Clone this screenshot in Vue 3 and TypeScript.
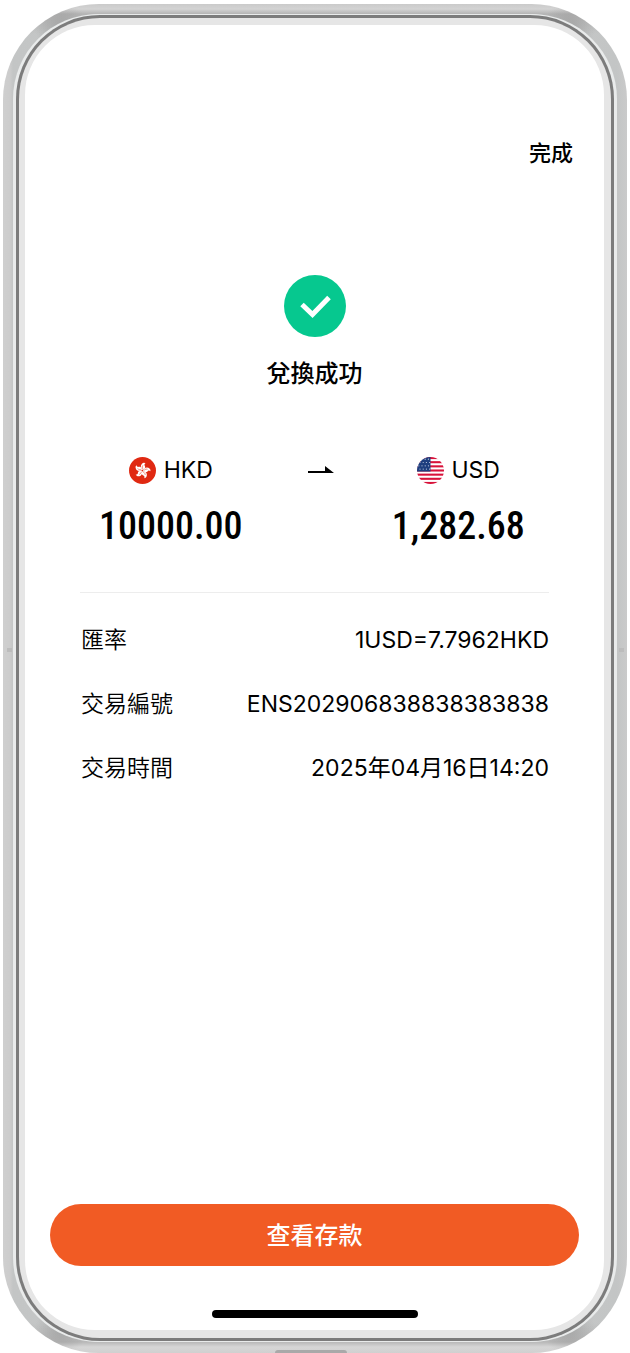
<script setup lang="ts">
interface Detail {
  label: string
  value: string
}

const details: Detail[] = [
  { label: '匯率', value: '1USD=7.7962HKD' },
  { label: '交易編號', value: 'ENS202906838838383838' },
  { label: '交易時間', value: '2025年04月16日14:20' },
]

const petals: number[] = [0, 72, 144, 216, 288]
const stripes: number[] = [0, 1, 2, 3, 4, 5, 6]
const starRows: number[] = [0, 1, 2, 3]
const starCols: number[] = [0, 1, 2, 3]
</script>

<template>
  <div class="page">
    <div class="phone">
      <span class="mark mark-left"></span>
      <span class="mark mark-right"></span>
      <span class="port"></span>
      <div class="rim">
        <div class="bezel">
          <main class="screen">
            <header class="topbar">
              <button type="button" class="done">完成</button>
            </header>

            <section class="status">
              <svg class="check" viewBox="0 0 62 62" aria-hidden="true">
                <circle cx="31" cy="31" r="31" fill="#06c88f" />
                <path d="M18 29.5L28.5 39.5L45 22.5" fill="none" stroke="#fff" stroke-width="5" />
              </svg>
              <h1 class="title">兌換成功</h1>
            </section>

            <section class="exchange">
              <div class="side">
                <div class="currency">
                  <svg class="flag" viewBox="0 0 27 27" aria-hidden="true">
                    <circle cx="13.5" cy="13.5" r="13.5" fill="#e02912" />
                    <g v-for="angle in petals" :key="angle" :transform="`rotate(${angle + 12} 13.5 13.5)`">
                      <path
                        d="M13.5 12.9C10.6 11.3 10.1 8.1 12.5 6.1C13.2 5.5 14.2 5.4 15 5.8C13.9 6.8 14 7.8 14.9 8.6C16.2 9.8 15.4 11.9 13.5 12.9Z"
                        fill="#fff"
                      />
                      <path d="M13.4 11.8C12.5 10.6 12.3 9.6 12.8 8.4" fill="none" stroke="#e02912" stroke-width="0.5" />
                    </g>
                  </svg>
                  <span>HKD</span>
                </div>
                <strong class="amount">10000.00</strong>
              </div>

              <svg class="arrow" viewBox="0 0 26 8" aria-hidden="true">
                <path d="M0 5H17V0L26 7H0Z" fill="#000" />
              </svg>

              <div class="side">
                <div class="currency">
                  <svg class="flag" viewBox="0 0 27 27" aria-hidden="true">
                    <defs>
                      <clipPath id="flag-disc"><circle cx="13.5" cy="13.5" r="13.5" /></clipPath>
                    </defs>
                    <g clip-path="url(#flag-disc)">
                      <rect width="27" height="27" fill="#fff" />
                      <rect v-for="n in stripes" :key="n" x="0" :y="n * 4.154" width="27" height="2.077" fill="#d8123a" />
                      <rect width="13.5" height="14.54" fill="#1f3f7f" />
                      <template v-for="r in starRows" :key="r">
                        <circle
                          v-for="c in starCols"
                          :key="c"
                          :cx="1.8 + c * 3.2 + (r % 2) * 1.2"
                          :cy="2.2 + r * 3.3"
                          r="0.6"
                          fill="#c5cfe3"
                        />
                      </template>
                    </g>
                  </svg>
                  <span>USD</span>
                </div>
                <strong class="amount">1,282.68</strong>
              </div>
            </section>

            <dl class="details">
              <div v-for="item in details" :key="item.label" class="row">
                <dt>{{ item.label }}</dt>
                <dd>{{ item.value }}</dd>
              </div>
            </dl>

            <footer class="bottom">
              <button type="button" class="primary">查看存款</button>
              <span class="home"></span>
            </footer>
          </main>
        </div>
      </div>
    </div>
  </div>
</template>

<style>
body {
  margin: 0;
  background: #fff;
}
</style>

<style scoped>
.page,
.page * {
  box-sizing: border-box;
}

.page {
  display: flex;
  min-height: 100vh;
  padding: 4px 3px 0;
  font-family: Inter, "Noto Sans CJK TC", sans-serif;
  color: #000;
}

.phone {
  position: relative;
  display: flex;
  flex: 1;
  padding: 11px 13px 12px;
  border-radius: 96px;
  overflow: hidden;
  background:
    radial-gradient(circle at 58px 24px, #70707050 0, #70707000 26px),
    radial-gradient(circle at calc(100% - 58px) 24px, #70707050 0, #70707000 26px),
    radial-gradient(circle at 58px calc(100% - 24px), #70707050 0, #70707000 26px),
    radial-gradient(circle at calc(100% - 58px) calc(100% - 24px), #70707050 0, #70707000 26px),
    linear-gradient(#cacaca 0, #d3d3d3 5px, #b4b4b4 10px, #b4b4b400 30px),
    linear-gradient(to top, #d0d0d0 0, #d6d6d6 6px, #b8b8b8 11px, #b8b8b800 30px),
    linear-gradient(to right, #cfcfcf 0, #cccccc 7px, #c3c5c5 10px, #cccccc 50%, #c3c5c5 calc(100% - 10px), #cacaca 100%);
}

.rim {
  display: flex;
  flex: 1;
  padding: 3px;
  border-radius: 84px;
  background: #7c7c7c;
  box-shadow: 2px 0 0 1px #e9ebeb, -2px 0 0 1px #e9ebeb;
}

.bezel {
  display: flex;
  flex: 1;
  padding: 7px 7px 8px 6px;
  border-radius: 81px;
  background: #e6e6e6;
}

.screen {
  display: flex;
  flex: 1;
  flex-direction: column;
  min-width: 0;
  border-radius: 70px;
  background: #fff;
}

.mark {
  position: absolute;
  top: 644px;
  width: 5px;
  height: 4px;
  background: #bcbcbc;
}

.mark-left {
  left: 4px;
}

.mark-right {
  right: 3px;
}

.port {
  position: absolute;
  bottom: 0;
  left: 50%;
  width: 72px;
  height: 3px;
  margin-left: -40px;
  border-radius: 12px 12px 0 0;
  background: #a9a9a9;
}

button {
  padding: 0;
  border: 0;
  font-family: inherit;
  cursor: pointer;
}

.topbar {
  display: flex;
  justify-content: flex-end;
  padding: 112px 31px 0;
}

.done {
  background: none;
  color: #000;
  font-size: 22px;
  font-weight: 500;
  line-height: 32px;
}

.status {
  display: flex;
  flex-direction: column;
  align-items: center;
  gap: 21px;
  padding-top: 106px;
}

.check {
  width: 62px;
  height: 62px;
}

.title {
  margin: 0;
  font-size: 24px;
  font-weight: 500;
  line-height: 32px;
}

.exchange {
  display: grid;
  grid-template-columns: 1fr 106px 1fr;
  margin: 0 55px;
  padding: 64px 0 42px;
  border-bottom: 1px solid #ededed;
}

.side {
  display: flex;
  flex-direction: column;
  align-items: center;
  gap: 16px;
}

.currency {
  display: flex;
  align-items: center;
  gap: 8px;
  font-size: 23px;
  line-height: 32px;
}

.flag {
  width: 27px;
  height: 27px;
}

.amount {
  font-family: "Roboto Condensed", "Liberation Sans Narrow", "Noto Sans CJK TC", sans-serif;
  font-size: 38px;
  font-weight: 500;
  line-height: 48px;
}

.arrow {
  width: 26px;
  height: 8px;
  margin: 12px 0 0 46px;
}

.details {
  display: flex;
  flex-direction: column;
  gap: 32px;
  margin: 31px 55px 0;
  padding-left: 1px;
  font-size: 23px;
  line-height: 32px;
}

.row {
  display: flex;
  justify-content: space-between;
}

dt {
  font-weight: 350;
}

dd {
  margin: 0;
}

.bottom {
  display: flex;
  flex-direction: column;
  align-items: center;
  gap: 44px;
  margin-top: auto;
  padding: 0 25px 12px;
}

.primary {
  width: 100%;
  padding-top: 2px;
  border-radius: 31px;
  background: #f15b24;
  color: #fff;
  font-size: 24px;
  font-weight: 500;
  line-height: 60px;
}

.home {
  width: 206px;
  height: 8px;
  border-radius: 4px;
  background: #000;
}
</style>
